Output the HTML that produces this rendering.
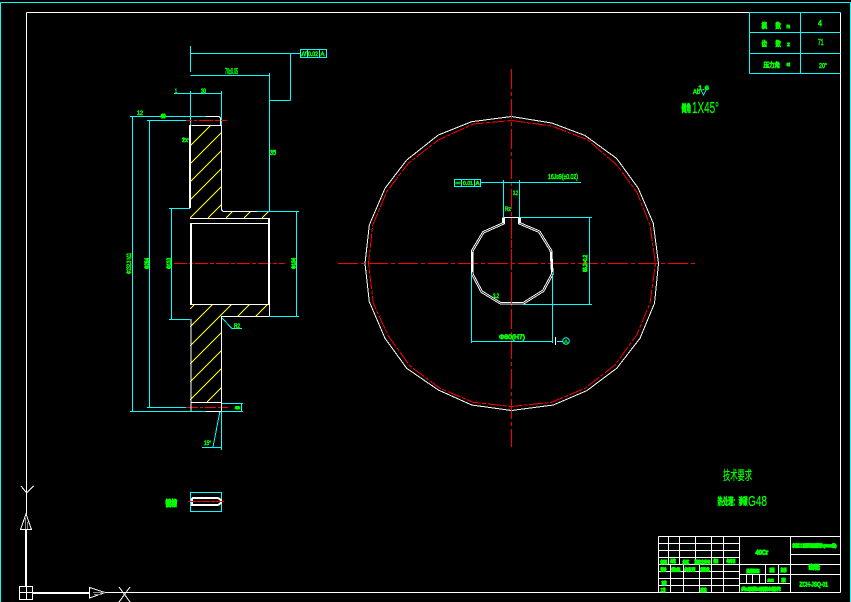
<!DOCTYPE html>
<html lang="zh">
<head>
<meta charset="utf-8">
<title>齿轮零件图</title>
<style>
html,body{margin:0;padding:0;background:#000;width:851px;height:602px;overflow:hidden}
svg{display:block}
.l{fill:none;shape-rendering:crispEdges}
text{font-family:"Liberation Sans","Noto Sans CJK SC",sans-serif;fill:#0f0}
.b{stroke:#0f0;stroke-width:1.2}
.c{stroke:#0f0;stroke-width:.9}
.m{stroke:#0f0;stroke-width:.6}
.t{stroke:#0f0;stroke-width:.25}
</style>
</head>
<body>
<svg width="851" height="602" viewBox="0 0 851 602" xmlns="http://www.w3.org/2000/svg">
<defs>
<clipPath id="h1"><path d="M190 125H221V211H269V218H190Z"/></clipPath>
<clipPath id="h2"><path d="M190 304H269V316H221V402H190Z"/></clipPath>
</defs>
<rect width="851" height="602" fill="#000"/>

<!-- drawing frames -->
<path class="l" stroke="#0ff" d="M0.5 2.5H850.5M0.5 2.5V602M850.5 2.5V602"/>
<path class="l" stroke="#fff" d="M26.5 12.5H749.5M840.5 12.5V592.5M105 592.5H840.5M26.5 12.5V514"/>

<!-- top right table -->
<path class="l" stroke="#0ff" d="M749.5 12.5H840.5M749.5 32.5H840.5M749.5 53.5H840.5M749.5 73.5H840.5M749.5 12.5V73.5M800.5 12.5V73.5"/>
<g>
<text class="c" x="761.500" y="28" font-size="7" textLength="5.500" lengthAdjust="spacingAndGlyphs">模</text>
<text class="c" x="775.500" y="28" font-size="7" textLength="5.500" lengthAdjust="spacingAndGlyphs">数</text>
<text class="c" x="786.500" y="28" font-size="5" textLength="3.500" lengthAdjust="spacingAndGlyphs">m</text>
<text class="m" x="818" y="26" font-size="8" textLength="4" lengthAdjust="spacingAndGlyphs">4</text>
<text class="c" x="761.500" y="46" font-size="7" textLength="5.500" lengthAdjust="spacingAndGlyphs">齿</text>
<text class="c" x="775.500" y="46" font-size="7" textLength="5.500" lengthAdjust="spacingAndGlyphs">数</text>
<text class="c" x="787" y="46" font-size="5" textLength="3" lengthAdjust="spacingAndGlyphs">z</text>
<text class="m" x="818" y="45" font-size="8" textLength="5.500" lengthAdjust="spacingAndGlyphs">71</text>
<text class="c" x="763.500" y="67" font-size="6.500" textLength="16.500" lengthAdjust="spacingAndGlyphs">压力角</text>
<text class="c" x="786.500" y="66" font-size="5" textLength="3.500" lengthAdjust="spacingAndGlyphs">α</text>
<text class="m" x="819" y="68" font-size="7.500" textLength="8" lengthAdjust="spacingAndGlyphs">20°</text>
</g>

<!-- chamfer note -->
<path class="l" stroke="#0ff" d="M700 88L703.500 95L707 88"/>
<text class="m" x="693" y="94" font-size="7" textLength="7" lengthAdjust="spacingAndGlyphs">Ab</text>
<text class="m" x="698" y="90" font-size="6" textLength="11" lengthAdjust="spacingAndGlyphs">1.6</text>
<text class="b" x="681.500" y="112" font-size="10" textLength="9.500" lengthAdjust="spacingAndGlyphs">倒角</text>
<text class="t" x="692" y="113" font-size="16" textLength="27" lengthAdjust="spacingAndGlyphs">1X45°</text>

<!-- side view: hatch -->
<g class="l" stroke="#ff0" clip-path="url(#h1)">
<path d="M190 146L211 125M190 164L229 125M190 182L247 125M190 200L265 125M190 218L283 125M208 218L301 125M226 218L280 164M244 218L262 200M262 218L280 200"/>
</g>
<g class="l" stroke="#ff0" clip-path="url(#h2)">
<path d="M190 309L200 299M190 327L220 297M190 346L240 296M190 364L250 304M190 382L270 302M190 400L270 320M207 402L240 369"/>
</g>

<!-- side view: cyan dims -->
<path class="l" stroke="#0ff" d="M190.500 53.500H300M190.500 46V72M290.500 53.500V100.500M269 100.500H290.500M190.500 75.500H269.500M269.500 73V211M174 93.500H221.500M221.500 91V211M190.500 91V208
M130 116.500H206M132.500 116.500V411M130 411.500H243M147 120.500H186M149.500 120.500V407M147 407.500H186M169 208.500H190M171.500 208.500V319M169 319.500H190M257 211.500H299M296.500 211.500V316M257 316.500H299
M221.500 403.500H243M241.500 403.500V411M221.500 403V450M220 411L213 447M202 447.500H221M222 318L232 328.500H242
M182 139H190M270 151H276"/>
<path class="l" stroke="#0ff" d="M300.500 49.500H326.500V57.500H300.500ZM307.500 49.500V57.500M319.500 49.500V57.500"/>

<!-- side view: red -->
<path class="l" stroke="#f00" d="M186 120.500H192M194 120.500H197M199 120.500H213M215 120.500H227"/>
<path class="l" stroke="#f00" d="M186 407.500H198M200 407.500H203M205 407.500H216M218 407.500H228"/>
<path class="l" stroke="#f00" stroke-dasharray="13 2 4 2" d="M174 263.500H285"/>

<!-- side view: white outline -->
<path class="l" stroke="#fff" d="M206 116.500H219L220.500 118V125M191.500 125.500H221.500M221.500 125V209L223 211.500H257M190 218.500H269M190 223.500H269"/>
<path class="l" stroke="#fff" stroke-width="2" d="M190 125V208M191 223V304M269 218V304"/>
<path class="l" stroke="#fff" d="M190 304.500H269M269.500 304V316M222 316.500H269M221.500 316V402M191 319V411.500M191 402.500H221.500M221.500 402V411.500M206 411.500H221"/>

<!-- front view: circles -->
<polygon fill="none" stroke="#f00" stroke-width="1" stroke-dasharray="14 1.500 4 1.500" shape-rendering="crispEdges" points="511.5,120.5 551.7,126 588,140 616.7,165 636.7,191.7 650,225 655.5,263.5 650,303.3 636.7,335 615,365 585,388.3 551.7,402.3 511.5,406.5 473.3,402.3 440,388.3 410,366 388.3,336 373.3,303.3 368.5,263.5 372.7,225 386.7,191.7 408.3,163.3 438.3,140 473.3,124"/>
<polygon fill="none" stroke="#fff" stroke-width="1" shape-rendering="crispEdges" points="511.5,116.5 551.7,123 585,135.5 616.7,158.5 638.3,188.3 653.3,223.3 658.5,263.5 654.5,303.3 640,338.3 616.7,368.3 586.7,390.7 553.3,405 511.5,410.5 471.7,405 438.3,390 406.7,368.3 385,338.3 369.3,301.7 365,263.5 369.3,225 385,188.3 406.7,160 438.3,135 471.7,121.7"/>

<!-- front view: centre lines -->
<path class="l" stroke="#f00" stroke-dasharray="20 3 4 3" d="M338 263.500H697"/>
<path class="l" stroke="#f00" stroke-dasharray="20 3 4 3" d="M511.500 69V447"/>

<!-- front view: bore with keyway -->
<path fill="none" stroke="#fff" stroke-width="2.600" shape-rendering="crispEdges" d="M503.500 217.500V223.300L483.300 232.300L472.300 250.700V274L481.700 291.700L500.700 303.300H523.300L543.300 290.700L552.300 274L551 250.700L539.300 231.700L519.500 223.300V217.500"/>
<path fill="none" stroke="#000" stroke-width=".7" d="M503.500 223.300L483.300 232.300L472.300 250.700V252M472.300 272V274L481.700 291.700L500.700 303.300H523.300L543.300 290.700L552.300 274V272M551 252V250.700L539.300 231.700L519.500 223.300"/>
<path class="l" stroke="#fff" d="M503.500 217.500H519.500"/>
<path class="l" stroke="#f00" stroke-dasharray="8 3" d="M511.500 218V304"/>

<!-- front view: cyan dims -->
<path class="l" stroke="#0ff" d="M480 182.500H581M503.500 180V217M519.500 180V217M519.500 217.500H592M589.500 217.500V304M523 304.500H592M471.500 274V343M552.500 274V343M471.500 341.500H552.500M557 341.500H563M493 297.500H498"/>
<path class="l" stroke="#fff" d="M555.500 337V345"/>
<path class="l" stroke="#0ff" d="M454.500 179.500H480.500V186.500H454.500ZM461.500 179.500V186.500M474.500 179.500V186.500"/>
<circle cx="566" cy="341" r="3.300" fill="none" stroke="#0ff"/>
<text class="t" x="564" y="343.500" font-size="5.500" textLength="4" lengthAdjust="spacingAndGlyphs">A</text>

<!-- dimension text -->
<g>
<text class="m" x="225" y="74" font-size="8" textLength="13" lengthAdjust="spacingAndGlyphs">70±0.05</text>
<text class="m" x="175" y="93" font-size="6" textLength="2" lengthAdjust="spacingAndGlyphs">1</text>
<text class="m" x="201" y="93" font-size="6" textLength="5" lengthAdjust="spacingAndGlyphs">30</text>
<text class="m" x="137" y="115" font-size="6" textLength="6" lengthAdjust="spacingAndGlyphs">12</text>
<text class="b" x="160.500" y="118" font-size="5" textLength="5" lengthAdjust="spacingAndGlyphs">40</text>
<text class="m" x="182" y="142" font-size="6" textLength="6" lengthAdjust="spacingAndGlyphs">2x</text>
<text class="m" x="270" y="155" font-size="7" textLength="6" lengthAdjust="spacingAndGlyphs">35</text>
<text class="m" x="308" y="56" font-size="6" textLength="10" lengthAdjust="spacingAndGlyphs">0.02</text>
<text class="m" x="320.500" y="56" font-size="6" textLength="4" lengthAdjust="spacingAndGlyphs">A</text>
<text class="m" x="301.500" y="56" font-size="6" textLength="5" lengthAdjust="spacingAndGlyphs">//</text>
<text class="m" transform="translate(131 274) rotate(-90)" font-size="6" textLength="21" lengthAdjust="spacingAndGlyphs">Φ232.3 h11</text>
<text class="c" transform="translate(149 269) rotate(-90)" font-size="6" textLength="11" lengthAdjust="spacingAndGlyphs">Φ284</text>
<text class="c" transform="translate(171 269) rotate(-90)" font-size="6" textLength="11" lengthAdjust="spacingAndGlyphs">Φ110</text>
<text class="c" transform="translate(295.500 269) rotate(-90)" font-size="5" textLength="11" lengthAdjust="spacingAndGlyphs">Φ134</text>
<text class="m" x="234" y="328" font-size="6" textLength="6" lengthAdjust="spacingAndGlyphs">R2</text>
<text class="b" x="235.500" y="409" font-size="3.500" textLength="4" lengthAdjust="spacingAndGlyphs">8</text>
<text class="m" x="204" y="445" font-size="6" textLength="7" lengthAdjust="spacingAndGlyphs">15°</text>
<text class="m" x="548" y="179" font-size="7" textLength="30" lengthAdjust="spacingAndGlyphs">16Js9(±0.02)</text>
<text class="m" x="463" y="185" font-size="5.500" textLength="10" lengthAdjust="spacingAndGlyphs">0.01</text>
<text class="m" x="475.500" y="185" font-size="5.500" textLength="4" lengthAdjust="spacingAndGlyphs">A</text>
<text class="m" x="455.500" y="185" font-size="5.500" textLength="5" lengthAdjust="spacingAndGlyphs">=</text>
<text class="m" x="513" y="195" font-size="6" textLength="5" lengthAdjust="spacingAndGlyphs">3.2</text>
<text class="m" x="505" y="211" font-size="6" textLength="6" lengthAdjust="spacingAndGlyphs">Rz</text>
<text class="c" transform="translate(587 272) rotate(-90)" font-size="5.500" textLength="17" lengthAdjust="spacingAndGlyphs">85.2+0.2</text>
<text class="c" x="499" y="339" font-size="6.500" textLength="26" lengthAdjust="spacingAndGlyphs">Φ80(H7)</text>
<text class="m" x="493" y="298" font-size="6" textLength="6" lengthAdjust="spacingAndGlyphs">3.2</text>
</g>

<!-- tech notes -->
<text class="t" x="723" y="480" font-size="13" textLength="29" lengthAdjust="spacingAndGlyphs">技术要求</text>
<text class="c" x="717.500" y="505" font-size="10" textLength="17.500" lengthAdjust="spacingAndGlyphs">热处理:</text>
<text class="c" x="738.500" y="505" font-size="10" textLength="9" lengthAdjust="spacingAndGlyphs">渗碳</text>
<text class="t" x="748" y="506" font-size="15" textLength="19" lengthAdjust="spacingAndGlyphs">G48</text>

<!-- key view -->
<text class="b" x="165.500" y="506" font-size="8" textLength="11.500" lengthAdjust="spacingAndGlyphs">键槽</text>
<path class="l" stroke="#0ff" d="M190.500 492.500H221.500V511.500H190.500Z"/>
<path class="l" stroke="#fff" stroke-width="2" d="M192 498H218L221 500V503L218 505H192V498"/>
<path class="l" stroke="#f00" stroke-dasharray="8 1 4 1" d="M188 501.500H224"/>

<!-- title block -->
<path class="l" stroke="#fff" d="M658.500 536.500H840.500M658.500 536.500V592.500M658.500 543.500H739M658.500 550.500H739M658.500 557.500H739M658.500 564.500H840M658.500 571.500H739M658.500 578.500H739M658.500 585.500H739
M668.500 536.500V564.500M679.500 536.500V564.500M695.500 536.500V564.500M711.500 536.500V592.500M723.500 536.500V592.500M670.500 564.500V592.500M683.500 564.500V592.500M699.500 564.500V592.500
M739.500 536.500V592.500M790.500 536.500V592.500M739.500 574.500H790.500M739.500 583.500H790.500M765.500 564.500V583.500M778.500 564.500V583.500M746.500 574.500V583.500M752.500 574.500V583.500M759.500 574.500V583.500
M790.500 554.500H840.500M790.500 574.500H840.500"/>
<g font-size="4">
<text class="b" x="660.500" y="563.500" textLength="6.500" lengthAdjust="spacingAndGlyphs">标记</text>
<text class="b" x="670.300" y="562.500" textLength="5.500" lengthAdjust="spacingAndGlyphs">处数</text>
<text class="b" x="682.500" y="563.500" textLength="6.500" lengthAdjust="spacingAndGlyphs">分区</text>
<text class="b" x="694.500" y="563.500" textLength="16" lengthAdjust="spacingAndGlyphs">更改文件号</text>
<text class="b" x="713.500" y="562.500" textLength="5" lengthAdjust="spacingAndGlyphs">签名</text>
<text class="b" x="726.500" y="562.500" textLength="9" lengthAdjust="spacingAndGlyphs">年月日</text>
<text class="b" x="660.500" y="570.800" textLength="6" lengthAdjust="spacingAndGlyphs">设计</text>
<text class="b" x="671.500" y="570.800" textLength="9" lengthAdjust="spacingAndGlyphs">姓名</text>
<text class="b" x="684.500" y="570.800" textLength="11" lengthAdjust="spacingAndGlyphs">年月日</text>
<text class="b" x="700.500" y="570.800" textLength="9" lengthAdjust="spacingAndGlyphs">标准化</text>
<text class="b" x="661.500" y="584.500" textLength="5" lengthAdjust="spacingAndGlyphs">审核</text>
<text class="b" x="660.500" y="591.500" textLength="5" lengthAdjust="spacingAndGlyphs">工艺</text>
<text class="b" x="700.500" y="591.500" textLength="6" lengthAdjust="spacingAndGlyphs">批准</text>
<text class="b" x="746.500" y="572.500" textLength="13" lengthAdjust="spacingAndGlyphs">阶段标记</text>
<text class="b" x="769.500" y="571.500" textLength="5" lengthAdjust="spacingAndGlyphs">重量</text>
<text class="b" x="780.500" y="571.500" textLength="6" lengthAdjust="spacingAndGlyphs">比例</text>
<text class="b" x="767.500" y="581.500" textLength="6" lengthAdjust="spacingAndGlyphs">1:2</text>
<text class="b" x="781.500" y="581.500" textLength="4" lengthAdjust="spacingAndGlyphs">张</text>
<text class="b" x="741.500" y="590.500" textLength="39" lengthAdjust="spacingAndGlyphs">共1张第1张版本替代</text>
<text class="b" x="792.500" y="547.200" textLength="44" lengthAdjust="spacingAndGlyphs">机械工程系课程设计(2012级)</text>
</g>
<text class="b" x="755.500" y="554.500" font-size="6" textLength="12.500" lengthAdjust="spacingAndGlyphs">40Cr</text>
<text class="b" x="808.500" y="569.500" font-size="6" textLength="11.500" lengthAdjust="spacingAndGlyphs">齿轮</text>
<text class="c" x="799.500" y="586.500" font-size="6" textLength="28.500" lengthAdjust="spacingAndGlyphs">ZCH-JSQ-01</text>

<!-- UCS icon -->
<path class="l" stroke="#fff" d="M21 486L26.700 493L33.700 486M26.500 493V503"/>
<path fill="none" stroke="#fff" shape-rendering="crispEdges" d="M26 514L20.500 529.500H31.500Z"/>
<path class="l" stroke="#888" d="M25.500 518V529M27.500 522V529"/>
<rect x="25" y="530" width="2" height="56" fill="#fff"/>
<path class="l" stroke="#fff" d="M19.500 586.500H32.500V599.500H19.500ZM26.500 586.500V599.500M19.500 592.500H32.500"/>
<rect x="32" y="592" width="57" height="2" fill="#fff"/>
<path fill="none" stroke="#fff" shape-rendering="crispEdges" d="M89.500 587.500L105 592.500L89.500 598Z"/>
<path class="l" stroke="#888" d="M93 592.500H105M94 594.500H102"/>
<path class="l" stroke="#fff" d="M119 587L130 602M130 587L119 602"/>
</svg>
</body>
</html>
